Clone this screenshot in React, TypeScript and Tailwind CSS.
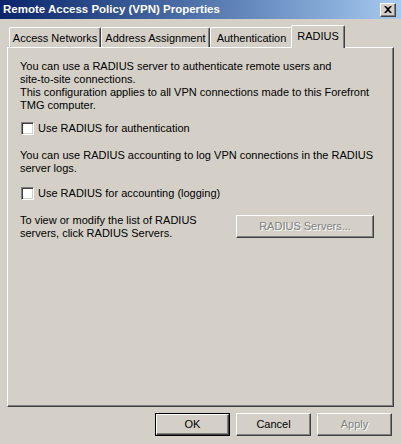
import * as React from 'react'

const font = "font-['Liberation_Sans','DejaVu_Sans',sans-serif]"

// Win2000-style raised edge (outer white/#404040, inner #d4d0c8/#808080)
const raised =
  'border border-t-white border-l-white border-r-[#404040] border-b-[#404040] shadow-[inset_-1px_-1px_0_#808080]'

function Checkbox({ label }: { label: string }) {
  return (
    <label className="flex items-center h-[13px]">
      <span className="w-[13px] h-[13px] bg-white border border-t-[#808080] border-l-[#808080] border-r-white border-b-white shadow-[inset_1px_1px_0_#404040,inset_-1px_-1px_0_#d4d0c8]" />
      <span className="ml-[4px] leading-[13px] text-black">{label}</span>
    </label>
  )
}

function Button({
  children,
  disabled,
  primary,
  className,
}: {
  children: React.ReactNode
  disabled?: boolean
  primary?: boolean
  className?: string
}) {
  return (
    <div
      className={
        'h-[23px] bg-[#d4d0c8] ' +
        (primary ? 'border border-black ' : '') +
        (className ?? '')
      }
    >
      <div className={'h-full w-full flex items-center justify-center ' + raised}>
        <span
          className={
            disabled
              ? 'text-[#808080] [text-shadow:1px_1px_0_#fff]'
              : 'text-black'
          }
        >
          {children}
        </span>
      </div>
    </div>
  )
}

function Tab({ label, width, active }: { label: string; width: number; active?: boolean }) {
  if (active) {
    return (
      <div
        className="relative z-10 -mx-[2px] -mb-[1px] h-[23px] bg-[#d4d0c8] border-t border-l border-t-white border-l-white border-r border-r-[#404040] rounded-t-[2px] shadow-[inset_-1px_0_0_#808080] flex items-start justify-center pt-[4px]"
        style={{ width: width + 4 }}
      >
        {label}
      </div>
    )
  }
  return (
    <div
      className="h-[20px] bg-[#d4d0c8] border-t border-l border-t-white border-l-white border-r border-r-[#404040] rounded-t-[2px] shadow-[inset_-1px_0_0_#808080] flex items-center justify-center pt-[1px]"
      style={{ width }}
    >
      {label}
    </div>
  )
}

export default function App() {
  return (
    <div className={`w-[401px] h-[444px] bg-[#d4d0c8] text-[11px] text-black overflow-hidden ${font}`}>
      {/* title bar */}
      <div className="h-[19px] flex items-center justify-between bg-gradient-to-r from-[#0a246a] to-[#a6caf0] pl-[3px] pr-[5px]">
        <span className="text-white font-bold text-[11.5px] leading-none">
          Remote Access Policy (VPN) Properties
        </span>
        <div className={'w-[16px] h-[14px] bg-[#d4d0c8] flex items-center justify-center ' + raised}>
          <svg width="8" height="7" viewBox="0 0 8 7">
            <path d="M0 0h2l2 2 2-2h2L5 3.5 8 7H6L4 5 2 7H0l3-3.5z" fill="#000" />
          </svg>
        </div>
      </div>

      {/* tab strip */}
      <div className="mt-[8px] ml-[9px] flex items-end h-[20px] leading-[13px]">
        <Tab label="Access Networks" width={92} />
        <Tab label="Address Assignment" width={109} />
        <Tab label="Authentication" width={83} />
        <Tab label="RADIUS" width={50} active />
      </div>

      {/* panel */}
      <div className="ml-[7px] w-[387px] h-[360px] border border-t-white border-l-white border-r-[#404040] border-b-[#404040] shadow-[inset_-1px_-1px_0_#808080] pl-[12px] pt-[12px] leading-[13px] whitespace-nowrap">
        <p>
          You can use a RADIUS server to authenticate remote users and
          <br />
          site-to-site connections.
          <br />
          This configuration applies to all VPN connections made to this Forefront
          <br />
          TMG computer.
        </p>
        <div className="mt-[10px] ml-[1px]">
          <Checkbox label="Use RADIUS for authentication" />
        </div>
        <p className="mt-[14px]">
          You can use RADIUS accounting to log VPN connections in the RADIUS
          <br />
          server logs.
        </p>
        <div className="mt-[12px] ml-[1px]">
          <Checkbox label="Use RADIUS for accounting (logging)" />
        </div>
        <div className="mt-[14px] flex items-start justify-between pr-[19px]">
          <p>
            To view or modify the list of RADIUS
            <br />
            servers, click RADIUS Servers.
          </p>
          <Button disabled className="w-[138px] mt-[1px]">
            RADIUS Servers...
          </Button>
        </div>
      </div>

      {/* dialog buttons */}
      <div className="mt-[6px] flex justify-end gap-[6px] pr-[9px]">
        <Button primary className="w-[75px]">
          OK
        </Button>
        <Button className="w-[75px]">Cancel</Button>
        <Button disabled className="w-[75px]">
          Apply
        </Button>
      </div>
    </div>
  )
}
